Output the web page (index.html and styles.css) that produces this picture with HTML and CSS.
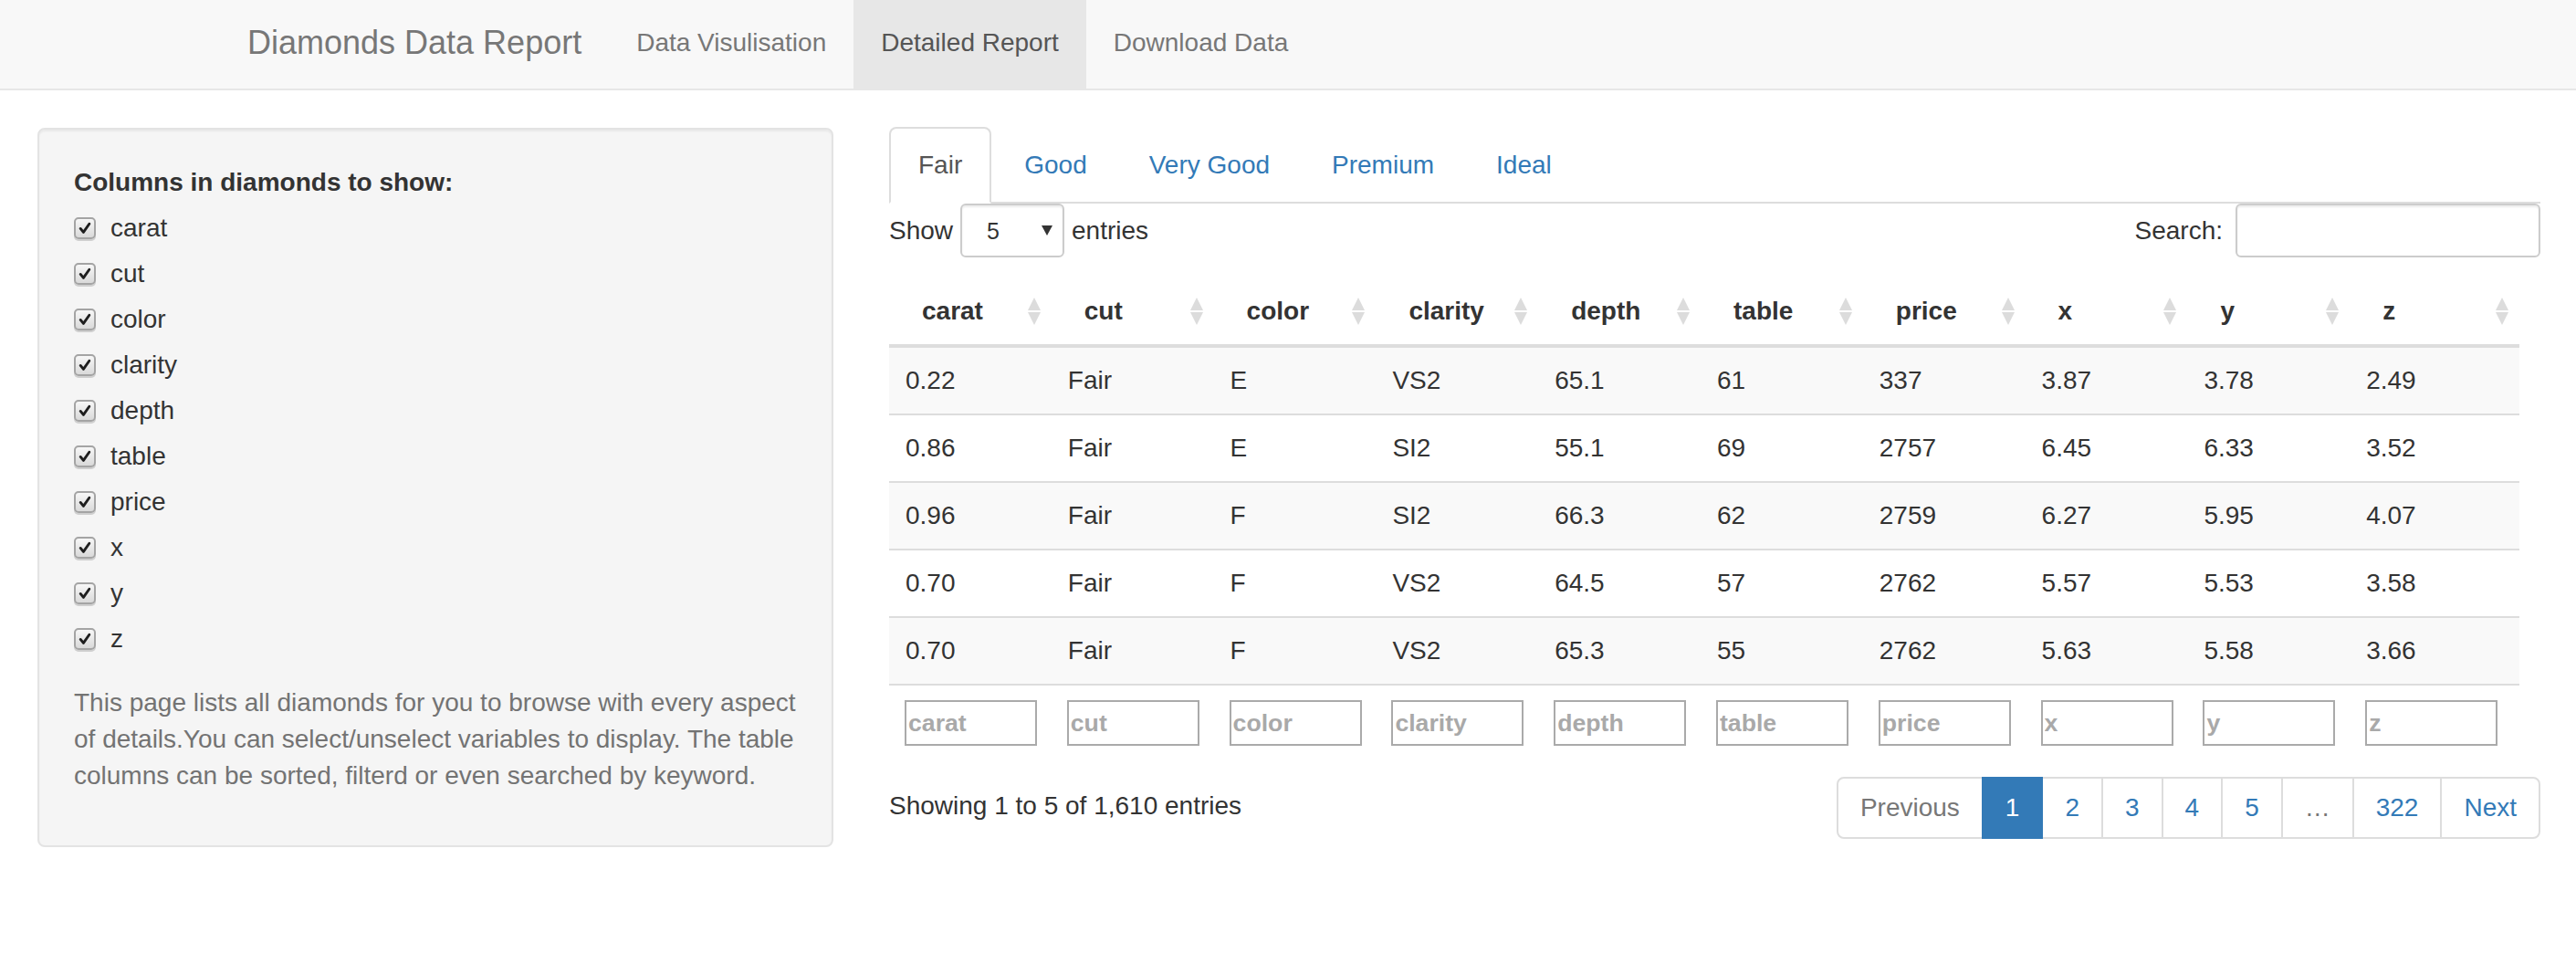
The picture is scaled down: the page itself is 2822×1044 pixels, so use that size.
FILE: index.html
```html
<!DOCTYPE html>
<html>
<head>
<meta charset="utf-8">
<title>Diamonds Data Report</title>
<link rel="stylesheet" href="styles.css">
</head>
<body>
<nav class="navbar">
  <div class="navbar-inner">
    <span class="brand">Diamonds Data Report</span>
    <ul class="nav">
      <li><a class="nav-link">Data Visulisation</a></li>
      <li><a class="nav-link active">Detailed Report</a></li>
      <li><a class="nav-link">Download Data</a></li>
    </ul>
  </div>
</nav>

<main class="main">
  <aside class="well">
    <div class="control-label">Columns in diamonds to show:</div>
    <div class="options">
      <label class="checkbox"><span class="cb"><svg viewBox="0 0 20 20" width="16" height="16"><path d="M4 10.5 L8 15.5 L16 4" fill="none" stroke="#1e1e1e" stroke-width="3.6" stroke-linecap="round" stroke-linejoin="round"/></svg></span><span>carat</span></label>
      <label class="checkbox"><span class="cb"><svg viewBox="0 0 20 20" width="16" height="16"><path d="M4 10.5 L8 15.5 L16 4" fill="none" stroke="#1e1e1e" stroke-width="3.6" stroke-linecap="round" stroke-linejoin="round"/></svg></span><span>cut</span></label>
      <label class="checkbox"><span class="cb"><svg viewBox="0 0 20 20" width="16" height="16"><path d="M4 10.5 L8 15.5 L16 4" fill="none" stroke="#1e1e1e" stroke-width="3.6" stroke-linecap="round" stroke-linejoin="round"/></svg></span><span>color</span></label>
      <label class="checkbox"><span class="cb"><svg viewBox="0 0 20 20" width="16" height="16"><path d="M4 10.5 L8 15.5 L16 4" fill="none" stroke="#1e1e1e" stroke-width="3.6" stroke-linecap="round" stroke-linejoin="round"/></svg></span><span>clarity</span></label>
      <label class="checkbox"><span class="cb"><svg viewBox="0 0 20 20" width="16" height="16"><path d="M4 10.5 L8 15.5 L16 4" fill="none" stroke="#1e1e1e" stroke-width="3.6" stroke-linecap="round" stroke-linejoin="round"/></svg></span><span>depth</span></label>
      <label class="checkbox"><span class="cb"><svg viewBox="0 0 20 20" width="16" height="16"><path d="M4 10.5 L8 15.5 L16 4" fill="none" stroke="#1e1e1e" stroke-width="3.6" stroke-linecap="round" stroke-linejoin="round"/></svg></span><span>table</span></label>
      <label class="checkbox"><span class="cb"><svg viewBox="0 0 20 20" width="16" height="16"><path d="M4 10.5 L8 15.5 L16 4" fill="none" stroke="#1e1e1e" stroke-width="3.6" stroke-linecap="round" stroke-linejoin="round"/></svg></span><span>price</span></label>
      <label class="checkbox"><span class="cb"><svg viewBox="0 0 20 20" width="16" height="16"><path d="M4 10.5 L8 15.5 L16 4" fill="none" stroke="#1e1e1e" stroke-width="3.6" stroke-linecap="round" stroke-linejoin="round"/></svg></span><span>x</span></label>
      <label class="checkbox"><span class="cb"><svg viewBox="0 0 20 20" width="16" height="16"><path d="M4 10.5 L8 15.5 L16 4" fill="none" stroke="#1e1e1e" stroke-width="3.6" stroke-linecap="round" stroke-linejoin="round"/></svg></span><span>y</span></label>
      <label class="checkbox"><span class="cb"><svg viewBox="0 0 20 20" width="16" height="16"><path d="M4 10.5 L8 15.5 L16 4" fill="none" stroke="#1e1e1e" stroke-width="3.6" stroke-linecap="round" stroke-linejoin="round"/></svg></span><span>z</span></label>
    </div>
    <p class="help-block">This page lists all diamonds for you to browse with every aspect of details.You can select/unselect variables to display. The table columns can be sorted, filterd or even searched by keyword.</p>
  </aside>

  <section class="content">
    <ul class="tabs">
      <li><a class="tab active">Fair</a></li>
      <li><a class="tab">Good</a></li>
      <li><a class="tab">Very Good</a></li>
      <li><a class="tab">Premium</a></li>
      <li><a class="tab">Ideal</a></li>
    </ul>

    <div class="dt-top">
      <div class="dt-length">
        <span>Show</span>
        <div class="select"><span>5</span><svg width="12" height="11" viewBox="0 0 12 11"><path d="M0 0 H12 L6 11 Z" fill="#333"/></svg></div>
        <span>entries</span>
      </div>
      <div class="dt-search">
        <span>Search:</span>
        <input class="search-input" type="text">
      </div>
    </div>

    <table class="dt">
      <colgroup>
        <col class="c"><col class="c"><col class="c"><col class="c"><col class="c">
        <col class="c"><col class="c"><col class="c"><col class="c"><col class="c-last">
      </colgroup>
      <thead>
        <tr>
          <th><div class="th-in"><span>carat</span><svg class="sort" width="14" height="30" viewBox="0 0 14 30"><path d="M0 14 L7 0 L14 14 Z" fill="#dcdcdc"/><path d="M0 16 H14 L7 30 Z" fill="#dcdcdc"/></svg></div></th>
          <th><div class="th-in"><span>cut</span><svg class="sort" width="14" height="30" viewBox="0 0 14 30"><path d="M0 14 L7 0 L14 14 Z" fill="#dcdcdc"/><path d="M0 16 H14 L7 30 Z" fill="#dcdcdc"/></svg></div></th>
          <th><div class="th-in"><span>color</span><svg class="sort" width="14" height="30" viewBox="0 0 14 30"><path d="M0 14 L7 0 L14 14 Z" fill="#dcdcdc"/><path d="M0 16 H14 L7 30 Z" fill="#dcdcdc"/></svg></div></th>
          <th><div class="th-in"><span>clarity</span><svg class="sort" width="14" height="30" viewBox="0 0 14 30"><path d="M0 14 L7 0 L14 14 Z" fill="#dcdcdc"/><path d="M0 16 H14 L7 30 Z" fill="#dcdcdc"/></svg></div></th>
          <th><div class="th-in"><span>depth</span><svg class="sort" width="14" height="30" viewBox="0 0 14 30"><path d="M0 14 L7 0 L14 14 Z" fill="#dcdcdc"/><path d="M0 16 H14 L7 30 Z" fill="#dcdcdc"/></svg></div></th>
          <th><div class="th-in"><span>table</span><svg class="sort" width="14" height="30" viewBox="0 0 14 30"><path d="M0 14 L7 0 L14 14 Z" fill="#dcdcdc"/><path d="M0 16 H14 L7 30 Z" fill="#dcdcdc"/></svg></div></th>
          <th><div class="th-in"><span>price</span><svg class="sort" width="14" height="30" viewBox="0 0 14 30"><path d="M0 14 L7 0 L14 14 Z" fill="#dcdcdc"/><path d="M0 16 H14 L7 30 Z" fill="#dcdcdc"/></svg></div></th>
          <th><div class="th-in"><span>x</span><svg class="sort" width="14" height="30" viewBox="0 0 14 30"><path d="M0 14 L7 0 L14 14 Z" fill="#dcdcdc"/><path d="M0 16 H14 L7 30 Z" fill="#dcdcdc"/></svg></div></th>
          <th><div class="th-in"><span>y</span><svg class="sort" width="14" height="30" viewBox="0 0 14 30"><path d="M0 14 L7 0 L14 14 Z" fill="#dcdcdc"/><path d="M0 16 H14 L7 30 Z" fill="#dcdcdc"/></svg></div></th>
          <th><div class="th-in"><span>z</span><svg class="sort" width="14" height="30" viewBox="0 0 14 30"><path d="M0 14 L7 0 L14 14 Z" fill="#dcdcdc"/><path d="M0 16 H14 L7 30 Z" fill="#dcdcdc"/></svg></div></th>
        </tr>
      </thead>
      <tbody>
        <tr class="odd"><td>0.22</td><td>Fair</td><td>E</td><td>VS2</td><td>65.1</td><td>61</td><td>337</td><td>3.87</td><td>3.78</td><td>2.49</td></tr>
        <tr><td>0.86</td><td>Fair</td><td>E</td><td>SI2</td><td>55.1</td><td>69</td><td>2757</td><td>6.45</td><td>6.33</td><td>3.52</td></tr>
        <tr class="odd"><td>0.96</td><td>Fair</td><td>F</td><td>SI2</td><td>66.3</td><td>62</td><td>2759</td><td>6.27</td><td>5.95</td><td>4.07</td></tr>
        <tr><td>0.70</td><td>Fair</td><td>F</td><td>VS2</td><td>64.5</td><td>57</td><td>2762</td><td>5.57</td><td>5.53</td><td>3.58</td></tr>
        <tr class="odd"><td>0.70</td><td>Fair</td><td>F</td><td>VS2</td><td>65.3</td><td>55</td><td>2762</td><td>5.63</td><td>5.58</td><td>3.66</td></tr>
      </tbody>
      <tfoot>
        <tr>
          <th><input class="filter" type="text" placeholder="carat"></th>
          <th><input class="filter" type="text" placeholder="cut"></th>
          <th><input class="filter" type="text" placeholder="color"></th>
          <th><input class="filter" type="text" placeholder="clarity"></th>
          <th><input class="filter" type="text" placeholder="depth"></th>
          <th><input class="filter" type="text" placeholder="table"></th>
          <th><input class="filter" type="text" placeholder="price"></th>
          <th><input class="filter" type="text" placeholder="x"></th>
          <th><input class="filter" type="text" placeholder="y"></th>
          <th><input class="filter" type="text" placeholder="z"></th>
        </tr>
      </tfoot>
    </table>

    <div class="dt-bottom">
      <div class="dt-info">Showing 1 to 5 of 1,610 entries</div>
      <ul class="pagination">
        <li><a class="page disabled first">Previous</a></li>
        <li><a class="page active">1</a></li>
        <li><a class="page">2</a></li>
        <li><a class="page">3</a></li>
        <li><a class="page">4</a></li>
        <li><a class="page">5</a></li>
        <li><a class="page disabled">…</a></li>
        <li><a class="page">322</a></li>
        <li><a class="page last">Next</a></li>
      </ul>
    </div>
  </section>
</main>
</body>
</html>
```

FILE: styles.css
```css
* { box-sizing: border-box; }

html, body {
  margin: 0;
  padding: 0;
  background: #fff;
}

body {
  font-family: "Liberation Sans", Arial, Helvetica, sans-serif;
  font-size: 28px;
  line-height: 40px;
  color: #333;
}

ul { list-style: none; margin: 0; padding: 0; }
a { text-decoration: none; cursor: pointer; }

/* ---------- navbar ---------- */
.navbar {
  background: #f8f8f8;
  border-bottom: 2px solid #e7e7e7;
  height: 99px;
}

.navbar-inner {
  width: 2340px;
  margin: 0 auto;
  display: flex;
  align-items: stretch;
  height: 97px;
}

.brand {
  font-size: 36px;
  line-height: 40px;
  padding: 27px 30px 30px;
  color: #777;
}

.nav { display: flex; }

.nav-link {
  display: block;
  padding: 27px 30px 30px;
  line-height: 40px;
  color: #777;
}

.nav-link.active {
  background: #e7e7e7;
  color: #555;
}

/* ---------- main layout ---------- */
.main {
  display: flex;
  align-items: flex-start;
  padding: 40px 39px 0 41px;
  gap: 61px;
}

.well {
  flex: 0 0 872px;
  margin-top: 1px;
  background: #f5f5f5;
  border: 2px solid #e3e3e3;
  border-radius: 8px;
  padding: 38px;
  box-shadow: inset 0 2px 2px rgba(0, 0, 0, 0.05);
}

.control-label {
  font-weight: bold;
  margin-bottom: 10px;
}

.options {
  display: flex;
  flex-direction: column;
  gap: 10px;
  margin-bottom: 30px;
}

.checkbox {
  display: flex;
  align-items: center;
  height: 40px;
}

.cb {
  width: 24px;
  height: 24px;
  margin-right: 16px;
  border: 2px solid #a4a4a4;
  border-radius: 5px;
  background: linear-gradient(#f7f7f7, #d9d9d9);
  box-shadow: 0 2px 0 #cfcfcf;
  display: flex;
  align-items: center;
  justify-content: center;
}

.help-block {
  margin: 0 0 18px;
  color: #737373;
}

/* ---------- content ---------- */
.content {
  flex: 1 1 auto;
  min-width: 0;
}

.tabs {
  display: flex;
  border-bottom: 2px solid #ddd;
}

.tabs li { margin-bottom: -2px; }

.tab {
  display: block;
  margin-right: 4px;
  padding: 20px 30px;
  line-height: 40px;
  border: 2px solid transparent;
  border-radius: 8px 8px 0 0;
  color: #337ab7;
}

.tab.active {
  color: #555;
  background: #fff;
  border-color: #ddd #ddd transparent #ddd;
}

.dt-top {
  display: flex;
  justify-content: space-between;
  align-items: center;
  height: 59px;
}

.dt-length {
  display: flex;
  align-items: center;
  gap: 8px;
}

.select {
  width: 114px;
  height: 59px;
  border: 2px solid #ccc;
  border-radius: 6px;
  box-shadow: inset 0 2px 2px rgba(0, 0, 0, 0.075);
  display: flex;
  align-items: center;
  justify-content: space-between;
  padding: 0 11px 0 27px;
  font-size: 25px;
}

.dt-search {
  display: flex;
  align-items: center;
}

.search-input {
  margin-left: 14px;
  width: 334px;
  height: 59px;
  border: 2px solid #ccc;
  border-radius: 6px;
  box-shadow: inset 0 2px 2px rgba(0, 0, 0, 0.075);
  font: 24px "Liberation Sans", Arial, sans-serif;
  padding: 0 20px;
  outline: none;
}

/* ---------- table ---------- */
.dt {
  width: 1786px;
  margin-top: 15px;
  table-layout: fixed;
  border-collapse: separate;
  border-spacing: 0;
}

.dt col.c { width: 177.8px; }

.dt thead th {
  padding: 24px 12px 16px 36px;
  font-weight: bold;
  text-align: left;
  border-bottom: 2px solid #ddd;
}

.th-in {
  display: flex;
  align-items: center;
  justify-content: space-between;
}

.sort { flex: 0 0 auto; }

.dt tbody td {
  padding: 16px 18px;
  border-top: 2px solid #ddd;
  white-space: nowrap;
}

.dt tbody tr.odd td { background: #f9f9f9; }

.dt tfoot th {
  padding: 16px 17px 12px;
  border-top: 2px solid #ddd;
  text-align: left;
}

.filter {
  display: block;
  width: 145px;
  height: 50px;
  border: 2px solid #aaa;
  border-radius: 0;
  padding: 0 2px;
  font: bold 26.67px "Liberation Sans", Arial, sans-serif;
  color: #333;
  background: #fff;
  outline: none;
}

.filter::placeholder { color: #a9a9a9; }

/* ---------- bottom ---------- */
.dt-bottom {
  display: flex;
  justify-content: space-between;
  align-items: flex-start;
  margin-top: 18px;
}

.dt-info { padding-top: 16px; }

.pagination {
  display: flex;
  margin-top: 4px;
}

.page {
  display: block;
  padding: 12px 24px;
  line-height: 40px;
  border: 2px solid #ddd;
  margin-left: -2px;
  color: #337ab7;
  background: #fff;
  position: relative;
}

.page.first {
  margin-left: 0;
  border-radius: 8px 0 0 8px;
}

.page.last { border-radius: 0 8px 8px 0; }

.page.disabled { color: #777; }

.page.active {
  background: #337ab7;
  border-color: #337ab7;
  color: #fff;
  z-index: 2;
}
```
